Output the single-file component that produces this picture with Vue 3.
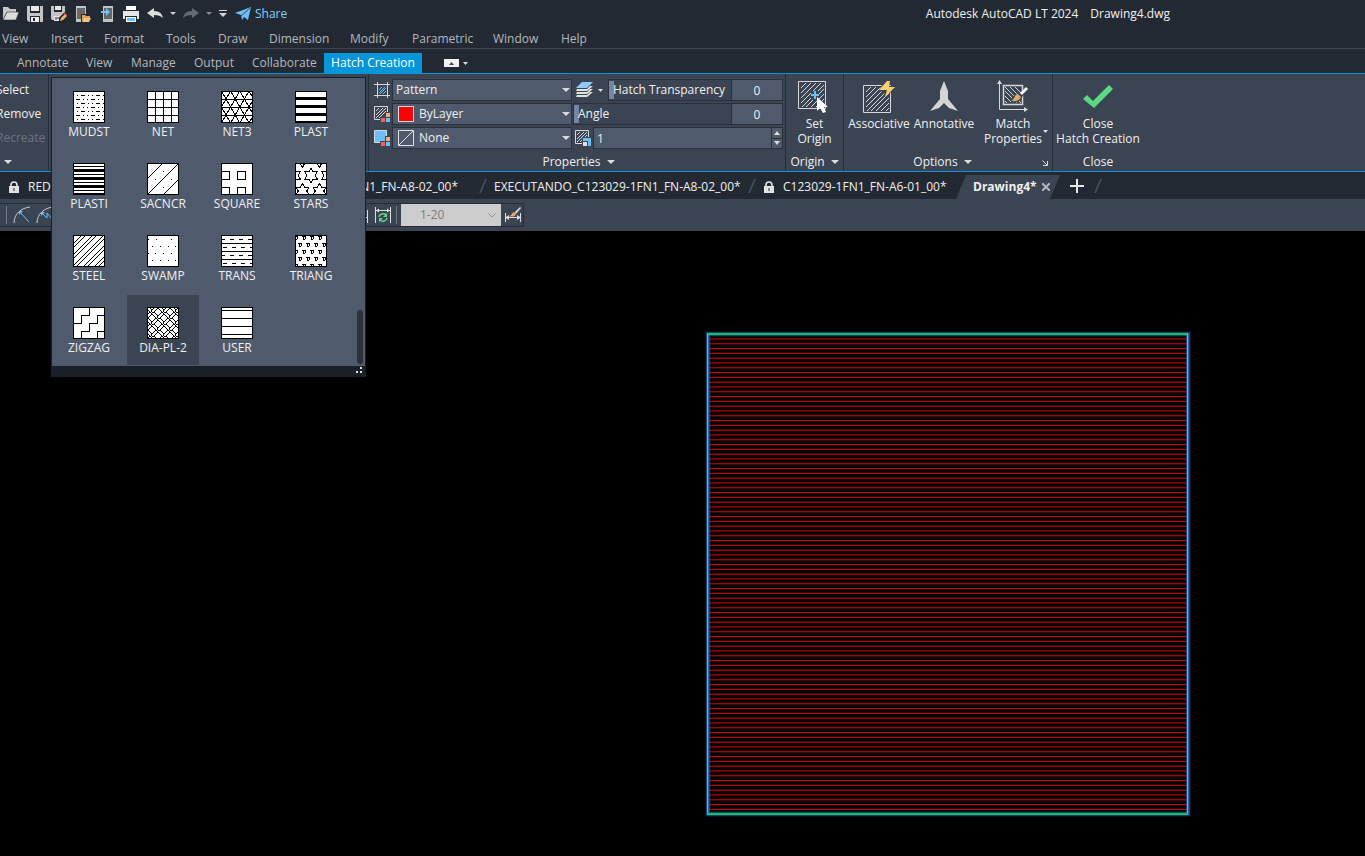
<script setup>
import { ref } from 'vue'

const menus = ['View', 'Insert', 'Format', 'Tools', 'Draw', 'Dimension', 'Modify', 'Parametric', 'Window', 'Help']
const ribbonTabs = ['Annotate', 'View', 'Manage', 'Output', 'Collaborate']

const range = (n) => Array.from({ length: n }, (_, i) => i)
const horizontals = (ys, from = 0, to = 32) => ys.map((y) => `M${from} ${y + 0.5}H${to}`).join('')
const dots = (points) => points.map(([x, y]) => `M${x} ${y + 0.5}h1`).join('')

const star = (cx, cy) => {
  const pts = range(12).map((i) => {
    const r = i % 2 ? 4.2 : 7.3
    const a = (i * Math.PI) / 6 - Math.PI / 2
    return `${(cx + r * Math.cos(a)).toFixed(1)} ${(cy + r * Math.sin(a)).toFixed(1)}`
  })
  return `M${pts.join('L')}Z`
}

const mudst = range(7).map((i) => {
  const y = 4 + i * 4
  const s = i % 2 ? -12 : -7
  return range(4).map((k) => {
    const x = s + k * 15
    return `M${x} ${y + 0.5}h4M${x + 7} ${y + 0.5}h1M${x + 11} ${y + 0.5}h1`
  }).join('')
}).join('')

const net3 = horizontals([8, 16, 24]) + range(8).map((i) => {
  const x = -18 + i * 9.2
  return `M${x} 32L${x + 18.4} 0M${x} 0L${x + 18.4} 32`
}).join('')

const steel = range(6).map((i) => {
  const s = 9 + i * 11
  return `M0 ${s}L${s} 0M0 ${s + 4}L${s + 4} 0`
}).join('')

const trans = horizontals([8, 16, 24]) + [4, 12, 20, 28].map((y, r) =>
  range(4).map((k) => `M${(r % 2 ? 2 : 0) + k * 9} ${y + 0.5}h4`).join('')).join('')

const triang = range(5).map((r) =>
  range(5).map((k) => {
    const x = k * 8 + (r % 2 ? 3 : -1)
    const y = 1 + r * 7
    return `M${x} ${y + 0.5}h4M${x + 1} ${y + 1}v3M${x + 3} ${y + 1}v2M${x + 1} ${y + 3.5}h2`
  }).join('')).join('')

const plate = range(6).map((r) =>
  range(6).map((k) => {
    const x = k * 6 - 2
    const y = r * 6 - 1
    return (r + k) % 2
      ? `M${x} ${y + 5}l5 -5l2 2l-5 5z`
      : `M${x} ${y + 1}l6 6M${x + 3} ${y}l4 4`
  }).join('')).join('')

const patterns = [
  { name: 'MUDST', d: mudst },
  { name: 'NET', d: horizontals([8, 16, 24]) + 'M8.5 0V32M16.5 0V32M24.5 0V32' },
  { name: 'NET3', d: net3 },
  { name: 'PLAST', d: '', bars: [[6, 3], [14, 3], [22, 3], [30, 2]] },
  { name: 'PLASTI', d: horizontals([3, 11, 19, 27]), bars: [[6, 3], [14, 3], [22, 3], [30, 2]] },
  { name: 'SACNCR', d: 'M0 32L32 0M0 16L16 0M16 32L32 16' + dots([[16, 8], [8, 16], [24, 16], [16, 24]]) },
  { name: 'SQUARE', d: 'M0 8.5H8.5V16.5H0M16.5 8.5h8v8h-8zM0 24.5H8.5V32M16.5 32V24.5h8V32' },
  { name: 'STARS', d: star(16, 12.5) + star(-1, 12.5) + star(33, 12.5) + star(7.5, 28) + star(24.5, 28) + star(7.5, -3) + star(24.5, -3) },
  { name: 'STEEL', d: steel },
  { name: 'SWAMP', d: dots([[1, 4], [9, 4], [24, 4], [5, 11], [13, 11], [21, 11], [28, 11], [1, 18], [8, 18], [16, 18], [24, 18], [5, 25], [13, 25], [21, 25], [28, 25]]) },
  { name: 'TRANS', d: trans },
  { name: 'TRIANG', d: triang },
  { name: 'ZIGZAG', d: 'M16.5 0V8.5H8.5V16.5H0M32 8.5H24.5V16.5H16.5V24.5H8.5V32M32 24.5H24.5V32' },
  { name: 'DIA-PL-2', d: plate },
  { name: 'USER', d: horizontals([3, 11, 19, 27]) }
]

const selected = ref('DIA-PL-2')
const transparency = ref(0)
const angle = ref(0)
const scale = ref('1')

const hatchLines = range(99).map((i) => 9.2 + 4.8 * (i + 1))
const bigDiag = 'M3 8L8 3M3 13L13 3M3 18L18 3M3 23L23 3M4 27L26 5M8 27L26 9M13 27L26 14M18 27L26 19M23 27L26 24'
</script>

<template>
  <div class="app">
    <header class="titlebar">
      <div class="quick">
        <button aria-label="Open"><svg width="16" height="16"><path d="M0 14V1h5l2 2h6v3H4z" fill="#c9c9c9" /><path d="M4 6h12l-3 8H0z" fill="#dcdcdc" stroke="#222933" stroke-width=".6" /></svg></button>
        <button aria-label="Save"><svg width="16" height="16"><path d="M0 0h16v16H2l-2-2z" fill="#c4c4c4" /><path d="M3 0h10v7H3z" fill="#222933" /><path d="M4 0h8v5H4z" fill="#e8e8e8" /><path d="M3 10h10v6H3z" fill="#222933" /><path d="M4 11h8v5H4z" fill="#f0f0f0" /><path d="M6 12h2v3H6z" fill="#222933" /></svg></button>
        <button aria-label="Save As"><svg width="16" height="16"><path d="M0 0h14v6L6 14H1l-1-1z" fill="#c4c4c4" /><path d="M3 0h8v6H3z" fill="#222933" /><path d="M4 0h6v4H4z" fill="#e8e8e8" /><path d="M3 10h5v5H3z" fill="#e8e8e8" /><path d="M5 11v3M7 11v2" stroke="#222933" /><path d="M8 16v-4l5-5 3 3-5 5z" fill="#222933" /><path d="M9 15l1-3 4-4 2 2-4 4z" fill="#f2b765" /><path d="M13 8l1-1 2 2-1 1z" fill="#ff5d5d" /></svg></button>
        <button aria-label="Open from mobile"><svg width="16" height="16"><path d="M1 0h10v16H1z" fill="#c4c4c4" /><path d="M2 2h8v11H2z" fill="#6a6a6a" /><path d="M6 8h10v8H6z" fill="#222933" /><path d="M7 15V9h3l1 1h4v2z" fill="#d9a55e" /><path d="M9 12h7l-2 4H7z" fill="#f6c57c" /></svg></button>
        <button aria-label="Save to mobile"><svg width="16" height="16"><path d="M4 0h10v16H4z" fill="#c4c4c4" /><path d="M5 2h8v11H5z" fill="#666" /><path d="M2 5h5V2l4 4-4 4V7H2z" fill="#6cc0fa" /></svg></button>
        <button aria-label="Plot"><svg width="16" height="16"><path d="M3 0h10v4H3z" fill="#fff" /><path d="M0 5h16v8h-2V10H2v3H0z" fill="#e6e6e6" /><path d="M3 11h10v5H3z" fill="#fff" /><path d="M4 12h8v3H4z" fill="#6cc0fa" /></svg></button>
        <button aria-label="Undo"><svg width="16" height="16"><path d="M0 7l7-5v3c6 0 8 3 9 7-2-2-5-3-9-3v3z" fill="#dedede" /></svg></button>
        <button class="tiny" aria-label="Undo list"><svg width="6" height="4"><path d="M0 0h6L3 3z" fill="#ccc" /></svg></button>
        <button aria-label="Redo"><svg width="16" height="16"><path d="M16 7L9 2v3C3 5 1 8 0 12c2-2 5-3 9-3v3z" fill="#646a73" /></svg></button>
        <button class="tiny" aria-label="Redo list"><svg width="6" height="4"><path d="M0 0h6L3 3z" fill="#888d94" /></svg></button>
        <button class="customize" aria-label="Customize"><svg width="8" height="8"><path d="M0 0h8v1H0zM0 3h8L4 7z" fill="#d5d5d5" /></svg></button>
      </div>
      <a class="share" href="#"><svg width="16" height="16"><path d="M0 7L16 1 6 9zM6 9L16 1l-3 13-4-3-2 3z" fill="#6cc0fa" /><path d="M6 10L15 2" stroke="#222933" stroke-width=".8" /></svg>Share</a>
      <div class="doc-title"><span>Autodesk AutoCAD LT 2024</span><span>Drawing4.dwg</span></div>
    </header>

    <nav class="menubar"><a v-for="m in menus" :key="m" href="#">{{ m }}</a></nav>

    <nav class="ribbon-tabs">
      <a v-for="t in ribbonTabs" :key="t" href="#">{{ t }}</a>
      <a class="active" href="#">Hatch Creation</a>
      <button class="minimize" aria-label="Minimize ribbon"><svg width="25" height="8"><path d="M0 0h15v8H0z" fill="#f2f2f2" /><path d="M5 6h5L7.500 3z" fill="#444" /><path d="M19 3h5l-2.500 3z" fill="#ddd" /></svg></button>
    </nav>

    <section class="ribbon">
      <div class="panel boundaries">
        <button>Select</button>
        <button>Remove</button>
        <button disabled>Recreate</button>
        <button class="more" aria-label="More boundary options"><svg width="8" height="4"><path d="M0 0h8L4 4z" fill="#dcdcdc" /></svg></button>
      </div>
      <div class="panel pattern-slot"></div>

      <div class="panel properties">
        <div class="prop-grid">
          <div class="prop-row">
            <svg width="16" height="16"><path d="M3.500 0v16M13.500 0v16M0 2.500h16M0 13.500h16" stroke="#d8d8d8" fill="none" /><path d="M5 8l3-3M5 11l6-6M6 12l6-6M9 12l3-3" stroke="#6cc0fa" /></svg>
            <select aria-label="Pattern type"><option>Pattern</option></select>
          </div>
          <div class="prop-row">
            <svg width="16" height="16"><path d="M.5 .5h13v13H.5z" stroke="#d8d8d8" fill="none" /><path d="M2 5l3-3M2 9l7-7M2 12l10-10M5 12l7-7" stroke="#d8d8d8" /><path d="M6 11h5V6h5v10H6z" fill="#3b4453" /><path d="M12 7h4v4h-4z" fill="#f5a97a" /><path d="M7 12h4v4H7z" fill="#ff5d5d" /><path d="M12 12h4v4h-4z" fill="#6cc0fa" /></svg>
            <div class="swatch-select"><svg class="swatch" width="16" height="16"><path d="M.5 .5h15v15H.5z" fill="#f00" stroke="#e0e0e0" /></svg><select class="with-swatch" aria-label="Hatch color"><option>ByLayer</option></select></div>
          </div>
          <div class="prop-row">
            <svg width="16" height="16"><path d="M.5 .5h12v12H.5z" stroke="#d8d8d8" fill="#6cc0fa" /><path d="M6 11h5V6h5v10H6z" fill="#3b4453" /><path d="M12 7h4v4h-4z" fill="#f5a97a" /><path d="M7 12h4v4H7z" fill="#ff5d5d" /><path d="M12 12h4v4h-4z" fill="#6cc0fa" /></svg>
            <div class="swatch-select"><svg class="swatch" width="16" height="16"><path d="M.5 .5h15v15H.5zM1 15L15 1" fill="none" stroke="#e0e0e0" /></svg><select class="with-swatch" aria-label="Background color"><option>None</option></select></div>
          </div>
        </div>
        <div class="value-grid">
          <div class="prop-row">
            <button class="layers" aria-label="Transparency source"><svg width="28" height="16"><path d="M6 0h11l-6 6H0z" fill="#8accfb" /><path d="M0 9l1-2h10l3-3h3l-6 5z" fill="#e2e2e2" /><path d="M0 12l1-2h10l3-3h3l-6 5z" fill="#e2e2e2" /><path d="M0 15l1-2h10l3-3h3l-6 5z" fill="#e2e2e2" /><path d="M22 7h5l-2.500 3z" fill="#ddd" /></svg></button>
            <div class="slider"><input id="tr" v-model="transparency" type="range" max="90"><label for="tr">Hatch Transparency</label></div>
            <input class="num" :value="transparency" aria-label="Transparency value">
          </div>
          <div class="prop-row">
            <div class="slider"><input id="an" v-model="angle" type="range" max="359"><label for="an">Angle</label></div>
            <input class="num" :value="angle" aria-label="Angle value">
          </div>
          <div class="prop-row">
            <svg class="scale-icon" width="16" height="16"><path d="M.5 .5h13v13H.5z" stroke="#d8d8d8" fill="none" /><path d="M2 5l3-3M2 9l7-7M2 12l10-10M5 12l7-7" stroke="#d8d8d8" /><path d="M7 7h9v9H7z" fill="#3b4453" /><path d="M8 8h8v8h-3v-5H8z" fill="#6cc0fa" /><path d="M8 12h4v4H8z" fill="#e2e2e2" /></svg>
            <input v-model="scale" class="scale" aria-label="Hatch scale">
            <div class="spinner">
              <button aria-label="Increase"><svg width="6" height="4"><path d="M0 4h6L3 0z" fill="#ddd" /></svg></button>
              <button aria-label="Decrease"><svg width="6" height="4"><path d="M0 0h6L3 4z" fill="#ddd" /></svg></button>
            </div>
          </div>
        </div>
        <button class="panel-title">Properties<svg width="8" height="4"><path d="M0 0h8L4 4z" fill="#dcdcdc" /></svg></button>
      </div>

      <div class="panel origin">
        <button class="big"><svg width="32" height="36"><path d="M.5 2.500h27v27H.5z" fill="none" stroke="#d8d8d8" /><path :d="bigDiag" transform="translate(0 1)" stroke="#d8d8d8" /><path d="M13 12h8v9h-8z" fill="#3b4453" /><path d="M16 12h2v3h3v2h-3v3h-2v-3h-3v-2h3z" fill="#6cc0fa" /><path d="M19 18v14l3-3 3 5 3-1-2-5h4z" fill="#fff" /></svg>Set<br>Origin</button>
        <button class="panel-title">Origin<svg width="8" height="4"><path d="M0 0h8L4 4z" fill="#dcdcdc" /></svg></button>
      </div>

      <div class="panel options">
        <div class="tools">
          <button class="big"><svg width="32" height="36"><path d="M.5 6.500h27v27H.5z" fill="none" stroke="#d8d8d8" /><path :d="bigDiag" transform="translate(0 5)" stroke="#d8d8d8" /><path d="M17 9l2-3h4l-1-3h5l-1 4h6l-3 3 3 5-6-2-4 5-1-5-5-1z" fill="#3b4453" /><path d="M24 2l3 0-1 6h6l-10 10 2-7h-8z" fill="#ffcf70" /></svg>Associative</button>
          <button class="big"><svg width="32" height="36"><path d="M16 2l4 10v8l10 12-9-3-5-5-5 5-9 3 10-12v-8z" fill="#d5d5d5" /></svg>Annotative</button>
          <button class="big"><svg width="32" height="36"><path d="M2.500 4v26.500H28" fill="none" stroke="#d8d8d8" /><path d="M0 5l2.500-4L5 5zM27 28l4 2.500-4 2.500z" fill="#d8d8d8" /><path d="M6.500 6.500h19v19h-19z" fill="none" stroke="#d8d8d8" stroke-width="1.500" /><path d="M8 22l2 2M8 17l7 7M8 12l12 12M8 8l16 16M13 8l11 11M18 8l7 7" stroke="#d8d8d8" /><path d="M14 24c1-7 4-11 9-9l4-5 2 3-4 5c-1 5-6 6-11 6z" fill="#3b4453" /><path d="M14 22c4-1 3-7 7-7l3 3c-2 4-6 5-10 4z" fill="#e0ab6a" /><path d="M23 14l6-6 2 2-6 6z" fill="#fff" /></svg>Match<br>Properties<svg class="drop" width="6" height="4"><path d="M0 0h5L2.500 3z" fill="#ddd" /></svg></button>
        </div>
        <button class="panel-title">Options<svg width="8" height="4"><path d="M0 0h8L4 4z" fill="#dcdcdc" /></svg></button>
        <button class="launcher" aria-label="Hatch settings"><svg width="6" height="6"><path d="M.5 .5L5 5M5.500 1v4.500H1" fill="none" stroke="#ddd" /></svg></button>
      </div>

      <div class="panel close">
        <button class="big"><svg width="32" height="36"><path d="M1 20l4-4 6 6L27 6l4 4-19 19z" fill="#5bd881" /></svg>Close<br>Hatch Creation</button>
        <span class="panel-title">Close</span>
      </div>

      <div class="gallery">
        <div class="cells">
          <button v-for="p in patterns" :key="p.name" :class="{ on: p.name === selected }" @click="selected = p.name">
            <svg width="32" height="32" shape-rendering="crispEdges">
              <rect width="32" height="32" fill="#fff" />
              <path :d="p.d" fill="none" stroke="#000" />
              <rect v-for="b in p.bars" :key="b[0]" x="0" :y="b[0]" width="32" :height="b[1]" />
              <rect x=".5" y=".5" width="31" height="31" fill="none" stroke="#000" />
            </svg>
            {{ p.name }}
          </button>
        </div>
        <div class="thumb"></div>
        <div class="grip"><svg width="6" height="6"><path d="M4 0h2v2H4zM0 4h2v2H0zM4 4h2v2H4z" fill="#e0e0e0" /></svg></div>
      </div>
    </section>

    <nav class="files">
      <a class="file first" href="#"><svg width="10" height="12"><path d="M2 6V4a3 3 0 0 1 6 0v2" fill="none" stroke="#e2e2e2" stroke-width="1.600" /><path d="M0 5h10v7H0z" fill="#e2e2e2" /><path d="M4.500 7h1v3h-1z" fill="#222933" /></svg>REDE</a>
      <a class="file second" href="#">C123029-1FN1_FN-A8-02_00*</a>
      <svg class="slash" width="8" height="16"><path d="M1 15L7 1" stroke="#4c5563" stroke-width="1.500" /></svg>
      <a class="file third" href="#">EXECUTANDO_C123029-1FN1_FN-A8-02_00*</a>
      <svg class="slash" width="8" height="16"><path d="M1 15L7 1" stroke="#4c5563" stroke-width="1.500" /></svg>
      <a class="file fourth" href="#"><svg width="10" height="12"><path d="M2 6V4a3 3 0 0 1 6 0v2" fill="none" stroke="#e2e2e2" stroke-width="1.600" /><path d="M0 5h10v7H0z" fill="#e2e2e2" /><path d="M4.500 7h1v3h-1z" fill="#222933" /></svg>C123029-1FN1_FN-A6-01_00*</a>
      <div class="file current"><a href="#">Drawing4*</a><button aria-label="Close drawing"><svg width="8" height="8"><path d="M0 0l8 8M8 0L0 8" stroke="#b4b8be" stroke-width="2" /></svg></button></div>
      <button class="new" aria-label="New drawing"><svg width="14" height="14"><path d="M7 0v14M0 7h14" stroke="#e8e8e8" stroke-width="2" /></svg></button>
      <svg class="slash" width="8" height="16"><path d="M1 15L7 1" stroke="#4c5563" stroke-width="1.500" /></svg>
    </nav>

    <div class="dimbar">
      <div class="strip">
        <i class="sep"></i>
        <button aria-label="Radius"><svg width="18" height="18"><path d="M1 17C1 8 8 2 17 1" fill="none" stroke="#c9ccd0" /><path d="M7 6l9 10" stroke="#6cc0fa" /><path d="M6 5h4l-4 4z" fill="#6cc0fa" /></svg></button>
        <button aria-label="Jogged"><svg width="18" height="18"><path d="M1 17C1 8 8 2 17 1" fill="none" stroke="#c9ccd0" /><path d="M6 7l5 5V7l6 7" fill="none" stroke="#6cc0fa" /><path d="M5 6h4l-4 4z" fill="#6cc0fa" /></svg></button>
        <span class="spacer"></span>
        <button aria-label="Dimension edit"><svg width="16" height="16"><path d="M1.500 3v13M13.500 3v13M2 10.500h12" fill="none" stroke="#ddd" /></svg></button>
        <button aria-label="Dimension update"><svg width="16" height="16"><path d="M.5 0v16M15.500 0v16M1 3.500h14" fill="none" stroke="#ddd" /><path d="M1 3.500l3-2v4zM15 3.500l-3-2v4z" fill="#ddd" /><path d="M4 10a4 3.500 0 0 1 7-2M12 11a4 3.500 0 0 1-7 2" fill="none" stroke="#5bd881" stroke-width="1.500" /><path d="M12 6v4H8zM4 15v-4h4z" fill="#5bd881" /></svg></button>
        <i class="sep"></i>
        <div class="style-select">
          <select aria-label="Dimension style" disabled><option>1-20</option></select>
          <svg width="8" height="5"><path d="M.5 .5L4 4L7.500 .5" fill="none" stroke="#909090" /></svg>
        </div>
        <button aria-label="Dimension style manager"><svg width="18" height="16"><path d="M1.500 6v9M16.500 6v9M2 10.500h14" fill="none" stroke="#ddd" /><path d="M1 10.500l4-2.500v5zM17 10.500l-4-2.500v5z" fill="#ddd" /><path d="M5 9c3 0 2-3 5-4l2 2c-1 3-4 3-7 2z" fill="#e0ab6a" /><path d="M11 5l5-5 1 1-5 6z" fill="#ddd" /></svg></button>
      </div>
    </div>

    <main class="canvas">
      <svg class="drawing" width="500" height="500">
        <path v-for="y in hatchLines" :key="y" :d="`M8 ${y}H488`" stroke="#e80000" />
        <g fill="none">
          <rect x="8" y="9" width="480" height="480" stroke="#1a3f7c" stroke-width="5" opacity=".5" />
          <rect x="8" y="9" width="480" height="480" stroke="#2e6fb8" stroke-width="3" opacity=".85" />
          <path d="M7 9H488M7 489H488" stroke="#10d848" stroke-width="2" opacity=".8" />
          <path d="M7.500 9V489M487.500 9V489" stroke="#35d890" stroke-width="1" />
        </g>
      </svg>
    </main>
  </div>
</template>

<style>
html, body { background: #000; }
</style>

<style scoped>
.app { min-height: 100vh; display: flex; flex-direction: column; font: 12px/16px "Segoe UI", "Open Sans", "Noto Sans", sans-serif; color: #f0f0f0; overflow: hidden; }
.app * { box-sizing: border-box; }
button { background: none; border: 0; padding: 0; color: inherit; font: inherit; display: flex; align-items: center; justify-content: center; }
a { color: inherit; text-decoration: none; white-space: nowrap; }
svg { display: block; flex: none; }
input, select { font: inherit; color: inherit; border-radius: 0; margin: 0; }

.titlebar { height: 28px; background: #222933; display: flex; align-items: center; padding-left: 3px; }
.quick { display: flex; gap: 8px; align-items: center; }
.quick button { width: 16px; }
.quick .tiny { width: 8px; margin: 0 -2px; }
.quick .customize { width: 8px; }
.share { display: flex; align-items: center; gap: 4px; margin-left: 8px; color: #8bcdf9; }
.doc-title { margin-left: auto; padding-right: 195px; display: flex; gap: 12px; }

.menubar { height: 21px; background: #222933; border-bottom: 1px solid #3b4453; padding: 3px 0 0 2px; color: #b4b8be; display: grid; grid-template-columns: 49px 53px 62px 52px 51px 81px 62px 81px 68px auto; }

.ribbon-tabs { height: 25px; background: #222933; border-bottom: 1px solid #0696d7; padding: 4px 0 0 17px; color: #b4b8be; display: grid; grid-template-columns: 69px 45px 63px 58px 72px 98px auto; line-height: 20px; }
.ribbon-tabs .active { background: #0696d7; color: #fff; height: 20px; text-align: center; }
.minimize { justify-self: start; margin-left: 22px; height: 20px; }

.ribbon { position: relative; height: 98px; background: #3b4453; border-bottom: 1px solid #0696d7; display: flex; }
.panel { position: relative; flex: none; border-right: 1px solid #262d38; }
.boundaries { width: 49px; overflow: hidden; padding-top: 4px; }
.boundaries button { height: 24px; margin-left: -4px; }
.boundaries button:disabled { color: #6c7480; }
.boundaries .more { height: 16px; margin-left: 4px; margin-top: 4px; }
.pattern-slot { width: 320px; }
.properties { width: 417px; padding: 5px 2px 0 5px; display: grid; grid-template-columns: 198px 1fr; align-content: start; gap: 4px 1px; }
.prop-grid, .value-grid { display: grid; gap: 2px; }
.prop-row { display: flex; height: 22px; align-items: center; }
.prop-grid .prop-row { gap: 2px; position: relative; }
.prop-row select, .swatch-select { flex: 1; height: 22px; }
.prop-row select { appearance: none; border: 1px solid #2a313c; padding: 0 3px; background: #4f5b6d; }
.prop-grid .prop-row::after { content: ""; position: absolute; right: 2px; top: 9px; border: 4px solid transparent; border-top-color: #dcdcdc; border-bottom: 0; pointer-events: none; }
.swatch-select { position: relative; display: flex; }
.swatch { position: absolute; left: 6px; top: 3px; }
.prop-row .with-swatch { padding-left: 26px; }
.layers { width: 35px; padding-right: 2px; }
.slider { flex: 1; height: 22px; position: relative; border: 1px solid #2a313c; display: flex; align-items: center; }
.slider input { appearance: none; position: absolute; inset: 0; width: 100%; height: 20px; background: none; }
.slider input::-webkit-slider-thumb { appearance: none; width: 5px; height: 18px; background: #7385a5; }
.slider label { position: relative; padding-left: 4px; pointer-events: none; white-space: nowrap; }
.num { width: 52px; height: 22px; border: 1px solid #2a313c; background: #4f5b6d; text-align: center; padding: 0; margin-left: -1px; }
.scale-icon { margin: 0 2px; }
.scale { flex: 1; min-width: 0; height: 22px; background: #4f5b6d; border: 1px solid #2a313c; padding: 0 3px; }
.spinner { width: 11px; height: 22px; background: #2a313c; display: grid; gap: 1px; padding: 1px 1px 1px 0; }
.spinner button { background: #4f5b6d; }
.panel-title { display: flex; align-items: center; justify-content: center; gap: 6px; height: 16px; }
.properties .panel-title { grid-column: 1 / -1; margin-top: 1px; }
.origin, .options, .close { display: flex; flex-direction: column; justify-content: space-between; align-items: center; padding: 5px 0 1px; }
.origin { width: 58px; }
.options { width: 209px; }
.options .panel-title { padding-right: 11px; }
.close { width: 90px; border: 0; }
.big { display: block; line-height: 15px; white-space: nowrap; position: relative; }
.big svg { margin: 0 auto 1px; }
.tools { display: grid; grid-template-columns: 68px 62px 76px; align-items: start; }
.big .drop { position: absolute; right: 2px; top: 51px; margin: 0; }
.launcher { position: absolute; right: 4px; bottom: 5px; }

.gallery { position: absolute; z-index: 2; left: 51px; top: 3px; width: 315px; background: #4f5b6d; border: 1px solid #191f27; border-bottom: 0; }
.cells { display: grid; grid-template-columns: repeat(4, 72px); gap: 2px; padding: 1px; }
.cells button { height: 70px; flex-direction: column; justify-content: flex-start; gap: 1px; padding-top: 12px; white-space: nowrap; }
.cells .on { background: #3b4453; }
.thumb { position: absolute; right: 2px; bottom: 13px; width: 6px; height: 54px; border-radius: 3px; background: #2a313c; }
.grip { height: 11px; background: #191f27; display: flex; justify-content: flex-end; padding: 1px 3px; }

.files { height: 27px; background: #222933; display: flex; align-items: center; color: #f0f0f0; }
.file { flex: none; display: flex; align-items: center; height: 27px; padding-top: 2px; gap: 9px; }
.first { width: 58px; padding-left: 9px; overflow: hidden; }
.second { width: 400px; justify-content: flex-end; }
.slash { margin: 0 7px 0 21px; }
.third { width: 233px; }
.fourth { width: 193px; padding-left: 1px; }
.current { width: 104px; height: 24px; align-self: flex-end; background: #3b4453; clip-path: polygon(10px 0, 100% 0, 94px 100%, 0 100%); font-weight: 700; padding: 0 0 0 17px; gap: 5px; }
.new { width: 34px; }
.new + .slash { margin-left: 0; }

.dimbar { height: 32px; background: #3b4453; padding-top: 4px; }
.strip { width: 524px; height: 24px; border: 1px solid #262d38; border-left: 0; display: flex; align-items: center; padding-left: 6px; }
.strip > * { flex: none; }
.strip .sep { width: 2px; height: 18px; border-left: 1px solid #707884; margin-right: 5px; }
.strip button { margin-right: 5px; }
.spacer { width: 295px; }
.strip button + .sep { margin-right: 3px; }
.style-select { position: relative; margin-right: 3px; }
.style-select select { appearance: none; display: block; width: 100px; height: 22px; border: 0; background: #cdcdcd; color: #7b7b7b; opacity: 1; padding: 0 19px; }
.style-select svg { position: absolute; right: 5px; top: 9px; pointer-events: none; }

.canvas { position: relative; flex: 1; min-height: 600px; background: #000; }
.drawing { position: absolute; left: 700px; top: 94px; }
</style>
